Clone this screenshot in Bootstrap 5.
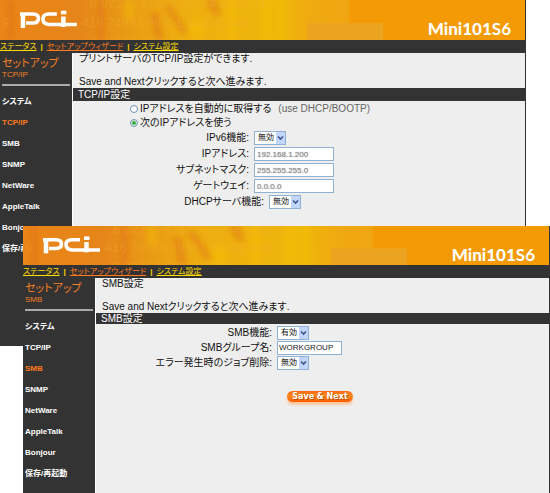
<!DOCTYPE html>
<html lang="ja">
<head>
<meta charset="utf-8">
<meta name="viewport" content="width=device-width, initial-scale=1">
<title>Mini101S6</title>
<link href="https://cdn.jsdelivr.net/npm/bootstrap@5.3.0/dist/css/bootstrap.min.css" rel="stylesheet">
<style>
  body { font-family: "Liberation Sans", "Noto Sans CJK JP", sans-serif; font-size: 10px; line-height: 14px; color: #111; background: #fff; font-feature-settings: "palt"; }
  .desktop { min-height: 100vh; }
  .win { background: #333; border-right: 1px solid #333; }
  .win-back { margin-right: 24px; }
  .win-front { left: 23px; right: 0; top: 226px; bottom: 0; }
  .banner { height: 40px; background: #f39a05; overflow: hidden; }
  .win-front .banner { height: 39px; }
  .banner-art { inset: 0; width: 100%; height: 100%; }
  .product { font-family: Lato, sans-serif; font-size: 17px; line-height: 20px; font-weight: 900; color: #fff; padding: 19px 14px 0 0; }
  .product span { font-weight: 700; }
  .menu { height: 13px; line-height: 13px; font-size: 8px; color: #ffd400; gap: 4px; }
  .menu a { color: #ffdc00; }
  .menu a.current { color: #ff7a1c; }
  .side { width: 72px; flex: none; padding: 4px 2px 0; color: #fff; }
  .side-title { color: #f58025; font-size: 11px; line-height: 13px; font-weight: 400; margin: 0; }
  .side-sub { color: #f58025; font-size: 8px; line-height: 10px; }
  .side-rule { height: 2px; background: #aaa; margin: 4px 0 5px; }
  .side ul { padding-bottom: 87px; }
  .side li a { display: block; font-size: 8px; line-height: 21px; font-weight: 700; color: #fff; text-decoration: none; white-space: nowrap; }
  .side li a.current { color: #ff7a1c; }
  .pane { background: #eee; border-left: 1px solid #fff; min-width: 0; }
  .intro { height: 35px; line-height: 12px; padding-left: 6px; }
  .intro p { margin: 0 0 11px; }
  .strip { background: #333; color: #fff; font-size: 10px; line-height: 13px; font-weight: 400; margin: 0 0 1px; padding-left: 5px; }
  .win-front .strip { line-height: 11px; }
  .choice { height: 14px; padding-left: 57px; gap: 2px; }
  .choice small { font-size: 10px; color: #666; margin-left: 5px; }
  .choice input { appearance: none; width: 8px; height: 8px; border: 1px solid #6d93b8; border-radius: 50%; background: #fff; margin: 0; }
  .choice input:checked { background: radial-gradient(circle, #2ba52b 0 1px, #fff 3px); }
  .field { height: 16px; gap: 5px; }
  .field label { width: 176px; text-align: right; white-space: nowrap; }
  .field .label-wide { width: 191px; }
  .field select { appearance: none; width: 32px; height: 14px; border: 1px solid #8fb1d3; border-radius: 0; padding: 0 0 0 3px; font-size: 8px; line-height: 12px; color: #111; background: #fff url("data:image/svg+xml,%3Csvg xmlns='http://www.w3.org/2000/svg' width='9' height='12'%3E%3Crect width='9' height='12' fill='%23c2d5fb'/%3E%3Cpath d='M2 4.5l2.5 2.5L7 4.5' fill='none' stroke='%233c5590' stroke-width='1.6'/%3E%3C/svg%3E") right center no-repeat; }
  .field input { width: 80px; height: 14px; border: 1px solid #8fb1d3; padding: 0 2px; font-size: 8px; line-height: 12px; color: #222; background: #fff; }
  .field input.obscured { color: #999; text-shadow: 0 0 1px #888; }
  .field input.group { width: 65px; padding: 0 1px; }
  .fields-tight .field { height: 15px; }
  .save { border: 0; border-radius: 8px; background: linear-gradient(#ff6a12, #ff8a20 45%, #ff5a00); color: #fff; font-family: "DejaVu Sans", sans-serif; font-size: 8px; font-weight: 700; line-height: 11px; width: 66px; height: 11px; padding: 0; margin: 21px 0 0 191px; box-shadow: 0 3px 2px #fbc9a4; text-shadow: 1px 1px #c05000; white-space: nowrap; }
</style>
<script src="https://cdn.jsdelivr.net/npm/bootstrap@5.3.0/dist/js/bootstrap.bundle.min.js"></script>
</head>
<body>
<svg width="0" height="0" class="position-absolute" aria-hidden="true">
  <defs>
    <linearGradient id="amber">
      <stop offset="0" stop-color="#ea8518"/><stop offset=".22" stop-color="#e68519"/><stop offset=".36" stop-color="#e99a14"/>
      <stop offset=".5" stop-color="#edad10"/><stop offset=".8" stop-color="#efb60b"/><stop offset=".9" stop-color="#efa911"/><stop offset="1" stop-color="#f0a511"/>
    </linearGradient>
    <filter id="soft"><feGaussianBlur stdDeviation="3 3"/></filter>
    <symbol id="art" viewBox="0 0 526 40" preserveAspectRatio="none">
      <rect width="526" height="40" fill="#f39a05"/>
      <rect width="350" height="40" fill="url(#amber)"/>
      <g filter="url(#soft)">
        <path d="M8 0h5v40H8zM98 0h6v40h-6zM150 12h8l6 28h-8zM170 4l20 30h-8l-18-28zM205 0h12l4 16h-6z" fill="#dc6412" opacity=".45"/>
        <path d="M125 0h8v20h-8zM190 20h14v20h-14zM228 0h8v40h-8zM262 0h10v40h-10zM278 0h8v40h-8z" fill="#f6c205" opacity=".5"/>
      </g>
      <path d="M350 23h34v17h-76V23z" fill="#eca31f"/>
      <g fill="#f4b03a" opacity=".3" font-family="Liberation Sans, sans-serif" font-size="13">
        <text x="90" y="8">6 92279 67323 50784 6562 31</text>
        <text x="2" y="27">9</text>
        <text x="82" y="27">416 74983 89351 94383 648</text>
        <text x="90" y="46">2 71562 40237 58931</text>
      </g>
      <g fill="none" stroke="#fff" stroke-width="3.6">
        <path d="M20 14h13q5.500 0 5.500 4.500T33 23h-7"/>
        <path d="M23 14v14" stroke-width="4.500"/>
        <path d="M57 14h-8q-6 0-6 5t6 5.500h28"/>
        <path d="M63.500 16.500V27" stroke-width="4.500"/>
        <path d="M61 12.500h5.500"/>
      </g>
    </symbol>
  </defs>
</svg>
<main class="desktop position-relative">
  <section class="win win-back" aria-label="TCP/IP設定">
    <header class="banner position-relative d-flex justify-content-end">
      <svg class="banner-art position-absolute" role="img" aria-label="PCi"><use href="#art"/></svg>
      <div class="product position-relative">Mini101<span>S6</span></div>
    </header>
    <nav class="menu d-flex"><a href="#">ステータス</a><b>|</b><a href="#" class="current">セットアップウィザード</a><b>|</b><a href="#">システム設定</a></nav>
    <div class="d-flex">
      <aside class="side">
        <h2 class="side-title">セットアップ</h2>
        <div class="side-sub">TCP/IP</div>
        <div class="side-rule"></div>
        <ul class="list-unstyled mb-0">
          <li><a href="#">システム</a></li>
          <li><a href="#" class="current">TCP/IP</a></li>
          <li><a href="#">SMB</a></li>
          <li><a href="#">SNMP</a></li>
          <li><a href="#">NetWare</a></li>
          <li><a href="#">AppleTalk</a></li>
          <li><a href="#">Bonjour</a></li>
          <li><a href="#">保存/再起動</a></li>
        </ul>
      </aside>
      <div class="pane flex-grow-1">
        <div class="intro"><p>プリントサーバのTCP/IP設定ができます.</p><p>Save and Nextクリックすると次へ進みます.</p></div>
        <h1 class="strip">TCP/IP設定</h1>
        <form>
          <div class="choice d-flex align-items-center"><input type="radio" name="mode" id="auto"><label for="auto">IPアドレスを自動的に取得する</label><small>(use DHCP/BOOTP)</small></div>
          <div class="choice d-flex align-items-center"><input type="radio" name="mode" id="manual" checked><label for="manual">次のIPアドレスを使う</label></div>
          <div class="field d-flex align-items-center"><label for="ipv6">IPv6機能:</label><select id="ipv6"><option>無効</option><option>有効</option></select></div>
          <div class="field d-flex align-items-center"><label for="ip">IPアドレス:</label><input class="obscured" id="ip" type="text" value="192.168.1.200"></div>
          <div class="field d-flex align-items-center"><label for="mask">サブネットマスク:</label><input class="obscured" id="mask" type="text" value="255.255.255.0"></div>
          <div class="field d-flex align-items-center"><label for="gate">ゲートウェイ:</label><input class="obscured" id="gate" type="text" value="0.0.0.0"></div>
          <div class="field d-flex align-items-center"><label for="dhcp" class="label-wide">DHCPサーバ機能:</label><select id="dhcp"><option>無効</option><option>有効</option></select></div>
        </form>
      </div>
    </div>
  </section>

  <section class="win win-front position-absolute d-flex flex-column" aria-label="SMB設定">
    <header class="banner position-relative d-flex justify-content-end">
      <svg class="banner-art position-absolute" role="img" aria-label="PCi"><use href="#art"/></svg>
      <div class="product position-relative">Mini101<span>S6</span></div>
    </header>
    <nav class="menu d-flex"><a href="#">ステータス</a><b>|</b><a href="#" class="current">セットアップウィザード</a><b>|</b><a href="#">システム設定</a></nav>
    <div class="d-flex flex-grow-1">
      <aside class="side">
        <h2 class="side-title">セットアップ</h2>
        <div class="side-sub">SMB</div>
        <div class="side-rule"></div>
        <ul class="list-unstyled mb-0 pb-0">
          <li><a href="#">システム</a></li>
          <li><a href="#">TCP/IP</a></li>
          <li><a href="#" class="current">SMB</a></li>
          <li><a href="#">SNMP</a></li>
          <li><a href="#">NetWare</a></li>
          <li><a href="#">AppleTalk</a></li>
          <li><a href="#">Bonjour</a></li>
          <li><a href="#">保存/再起動</a></li>
        </ul>
      </aside>
      <div class="pane flex-grow-1">
        <div class="intro"><p>SMB設定</p><p>Save and Nextクリックすると次へ進みます.</p></div>
        <h1 class="strip">SMB設定</h1>
        <form>
          <div class="fields-tight">
            <div class="field d-flex align-items-center"><label for="smb">SMB機能:</label><select id="smb"><option>有効</option><option>無効</option></select></div>
            <div class="field d-flex align-items-center"><label for="group">SMBグループ名:</label><input class="group" id="group" type="text" value="WORKGROUP"></div>
            <div class="field d-flex align-items-center"><label for="job">エラー発生時のジョブ削除:</label><select id="job"><option>無効</option><option>有効</option></select></div>
          </div>
          <button class="save d-block" type="button">Save &amp; Next</button>
        </form>
      </div>
    </div>
  </section>
</main>
</body>
</html>
